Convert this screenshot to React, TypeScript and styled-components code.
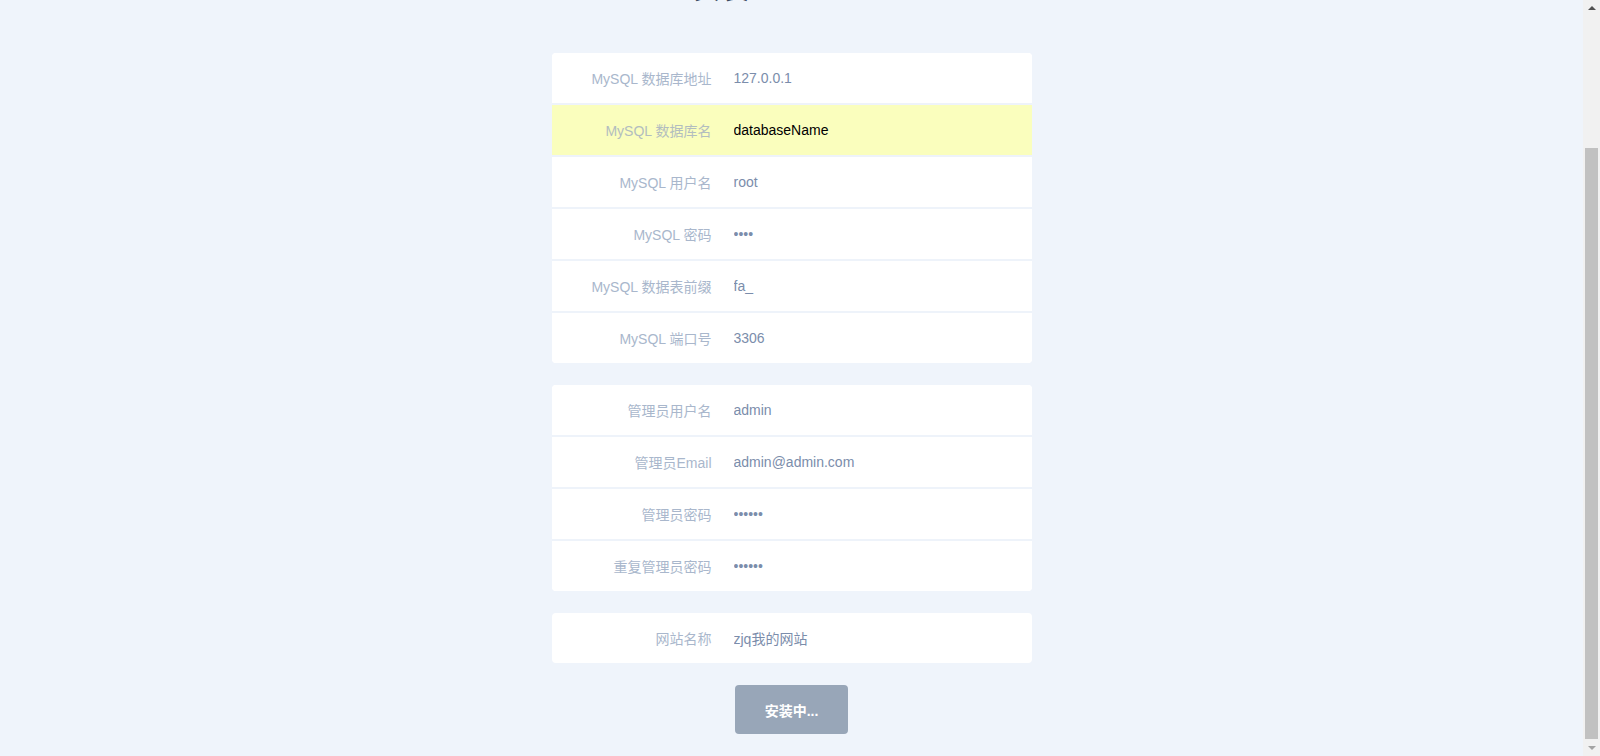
import styled, { createGlobalStyle } from "styled-components";
import { useLayoutEffect, useRef, useState } from "react";

const GlobalStyle = createGlobalStyle`
  html, body {
    margin: 0;
    padding: 0;
    height: 100%;
    overflow: hidden;
    background: #eff4fb;
    font-family: "Liberation Sans", "Noto Sans CJK SC", sans-serif;
  }
  #root {
    height: 100%;
  }
`;

const StyledPage = styled.div`
  display: flex;
  height: 100vh;
  background: #eff4fb;
`;

const StyledViewport = styled.div`
  flex: 1;
  min-width: 0;
  overflow-y: auto;
  scrollbar-width: none;
  &::-webkit-scrollbar {
    display: none;
  }
`;

// полоса прокрутки в стиле windows
const StyledScrollbar = styled.div`
  flex: 0 0 17px;
  display: flex;
  flex-direction: column;
  background: #f1f1f1;
`;

const StyledArrow = styled.div<{ $up?: boolean; $color: string }>`
  flex: 0 0 17px;
  display: flex;
  align-items: center;
  justify-content: center;
  &::before {
    content: "";
    width: 0;
    height: 0;
    border-left: 4px solid transparent;
    border-right: 4px solid transparent;
    ${(p) =>
      p.$up
        ? `border-bottom: 4px solid ${p.$color}; margin-bottom: 1px;`
        : `border-top: 4px solid ${p.$color}; margin-top: 1px;`}
  }
`;

const StyledTrack = styled.div`
  flex: 1;
  display: flex;
  flex-direction: column;
  padding: 0 2px;
`;

const StyledThumb = styled.div`
  background: #c1c1c1;
`;

const StyledContainer = styled.div`
  width: 480px;
  margin: 0 auto;
  padding: 138px 0 22px;
  display: flex;
  flex-direction: column;
`;

const StyledTitle = styled.h2`
  margin: 0 0 43px;
  height: 40px;
  line-height: 40px;
  font-size: 28px;
  font-weight: normal;
  text-align: center;
  color: #3b4b61;
`;

const StyledCard = styled.div`
  background: #fff;
  border-radius: 4px;
  overflow: hidden;
  margin-bottom: 22px;
  &:last-of-type {
    margin-bottom: 23px;
  }
`;

const StyledRow = styled.div<{ $autofill?: boolean }>`
  display: flex;
  align-items: center;
  height: 50px;
  background: ${(p) => (p.$autofill ? "#fafebd" : "#fff")};
  & + & {
    border-top: 2px solid #eef3fa;
  }
`;

const StyledLabel = styled.label<{ $autofill?: boolean }>`
  flex: 0 0 160px;
  text-align: right;
  font-size: 14px;
  color: ${(p) => (p.$autofill ? "#b2bdbf" : "#a9b7cc")};
  white-space: nowrap;
`;

const StyledInput = styled.input<{ $autofill?: boolean }>`
  flex: 1;
  height: 100%;
  margin: 0;
  padding: 0 0 0 22px;
  border: none;
  outline: none;
  background: transparent;
  font-family: "Liberation Sans", "Noto Sans CJK SC", sans-serif;
  font-size: 14px;
  color: ${(p) => (p.$autofill ? "#000" : "#7b8dab")};
`;

const StyledFooter = styled.div`
  display: flex;
  justify-content: center;
`;

const StyledButton = styled.button`
  width: 113px;
  height: 49px;
  border: none;
  border-radius: 4px;
  background: #98a6b8;
  color: #fff;
  font-family: "Liberation Sans", "Noto Sans CJK SC", sans-serif;
  font-size: 14px;
  font-weight: bold;
  cursor: default;
`;

type Field = {
  label: string;
  value: string;
  type?: string;
  autofill?: boolean;
};

const groups: Field[][] = [
  [
    { label: "MySQL 数据库地址", value: "127.0.0.1" },
    { label: "MySQL 数据库名", value: "databaseName", autofill: true },
    { label: "MySQL 用户名", value: "root" },
    { label: "MySQL 密码", value: "root", type: "password" },
    { label: "MySQL 数据表前缀", value: "fa_" },
    { label: "MySQL 端口号", value: "3306" },
  ],
  [
    { label: "管理员用户名", value: "admin" },
    { label: "管理员Email", value: "admin@admin.com" },
    { label: "管理员密码", value: "123456", type: "password" },
    { label: "重复管理员密码", value: "123456", type: "password" },
  ],
  [{ label: "网站名称", value: "zjq我的网站" }],
];

const App = () => {
  const viewRef = useRef<HTMLDivElement>(null);
  const [thumb, setThumb] = useState({ top: 0, height: 0 });

  useLayoutEffect(() => {
    const el = viewRef.current;
    if (!el) return;
    el.scrollTop = el.scrollHeight; // прокрутка до кнопки
    const track = el.clientHeight - 34;
    setThumb({
      top: (track * el.scrollTop) / el.scrollHeight,
      height: (track * el.clientHeight) / el.scrollHeight,
    });
  }, []);

  return (
    <StyledPage>
      <GlobalStyle />
      <StyledViewport ref={viewRef}>
        <StyledContainer>
          <StyledTitle>安装 FastAdmin</StyledTitle>

          {groups.map((fields, i) => (
            <StyledCard key={i}>
              {fields.map((f) => (
                <StyledRow key={f.label} $autofill={f.autofill}>
                  <StyledLabel $autofill={f.autofill}>{f.label}</StyledLabel>
                  <StyledInput
                    type={f.type || "text"}
                    defaultValue={f.value}
                    readOnly
                    $autofill={f.autofill}
                  />
                </StyledRow>
              ))}
            </StyledCard>
          ))}

          <StyledFooter>
            <StyledButton disabled>安装中...</StyledButton>
          </StyledFooter>
        </StyledContainer>
      </StyledViewport>

      <StyledScrollbar>
        <StyledArrow $up $color="#505050" />
        <StyledTrack>
          <StyledThumb style={{ marginTop: thumb.top, height: thumb.height }} />
        </StyledTrack>
        <StyledArrow $color="#a3a3a3" />
      </StyledScrollbar>
    </StyledPage>
  );
};

export default App;
